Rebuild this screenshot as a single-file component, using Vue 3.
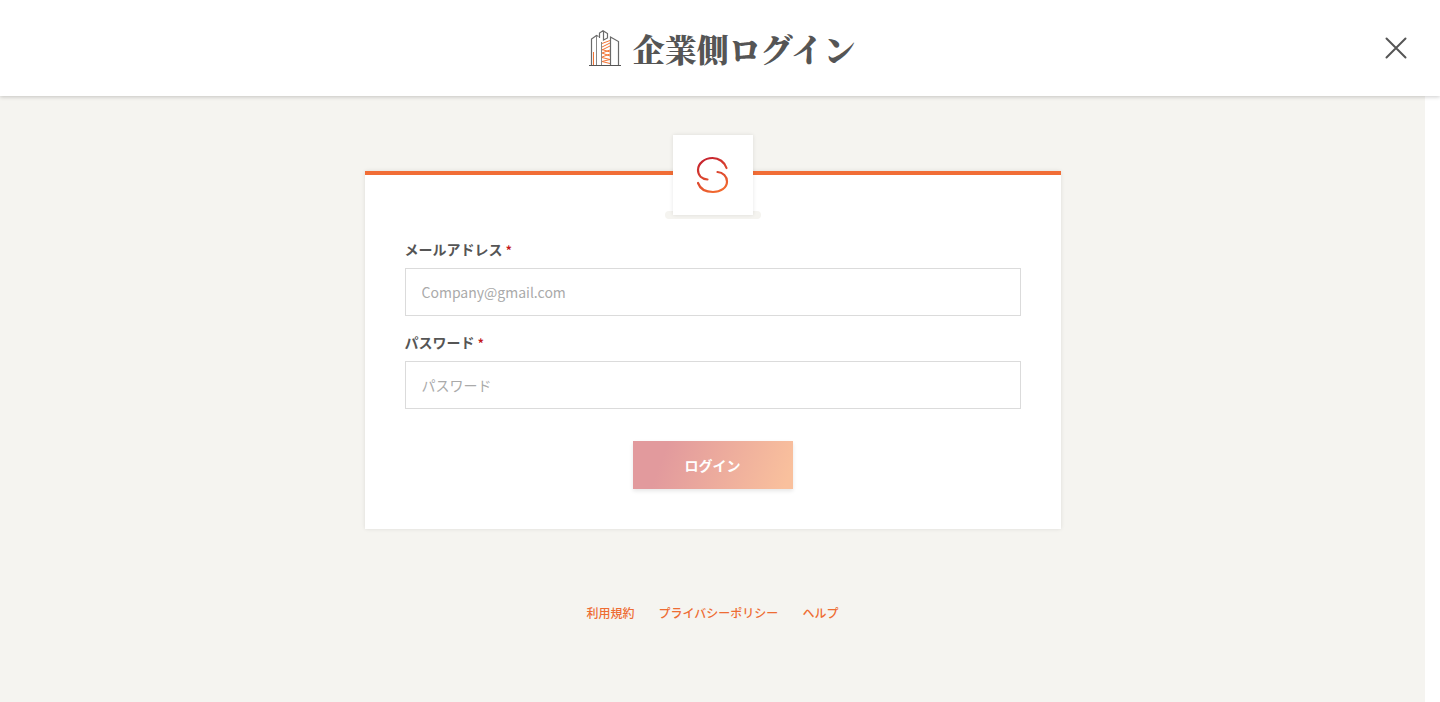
<script setup>
import { ref } from 'vue'

const email = ref('')
const password = ref('')
const links = ['利用規約', 'プライバシーポリシー', 'ヘルプ']
</script>

<template>
  <div class="page">
    <header class="header">
      <div class="brand">
        <svg class="building" viewBox="0 0 32 36" width="32" height="36" fill="none" aria-hidden="true">
          <g stroke="#6a6a6a" stroke-width="1.200">
            <path d="M2.500 35V9L7.500 5.500L9.500 6.500" />
            <path d="M10.500 8V3L14 .700L18.500 3.500V8L14.500 10V1" />
            <path d="M21.500 35V7L29.500 11.500V35" />
          </g>
          <path d="M7.500 35V6M12.500 35V12" stroke="#888" />
          <path d="M0 35.500H32" stroke="#555" />
          <path d="M4.500 35V22M13 13.500L21 10.500M13 17L21 13M13 20L21 16M13 19.500L21 22M13 23L21 20M13 23L21 26M13 27L21 24M13 27.500L21 29.500M13 31.500L21 29.500M13 31.500L21 33.500" stroke="#f37435" />
        </svg>
        <h1>企業側ログイン</h1>
      </div>
      <button class="close" type="button" aria-label="閉じる">
        <svg viewBox="0 0 22 22" width="22" height="22" aria-hidden="true">
          <path d="M1.500 1.500L20.500 20.500M20.500 1.500L1.500 20.500" stroke="#555" stroke-width="2" stroke-linecap="round" />
        </svg>
      </button>
    </header>

    <main class="main">
      <form class="card" @submit.prevent>
        <div class="emblem">
          <svg viewBox="0 0 34 38" width="34" height="38" fill="none" aria-hidden="true">
            <defs>
              <linearGradient id="emblem-stroke" x1="8" y1="2" x2="24" y2="36" gradientUnits="userSpaceOnUse">
                <stop offset="0" stop-color="#c4202e" />
                <stop offset="1" stop-color="#f36c2f" />
              </linearGradient>
            </defs>
            <path d="M30.500 12C28.500 6 23 2 16.500 2C8.500 2 2 7.500 2 14C2 19.500 6 23 11.500 23.500M21.500 16C27 16.500 31 20.500 31 25.500C31 32 24.500 36 17 36C9.500 36 4 32.500 2 27" stroke="url(#emblem-stroke)" stroke-width="2.200" stroke-linecap="round" />
          </svg>
        </div>

        <div class="field">
          <label for="email">メールアドレス <span class="required">*</span></label>
          <input id="email" v-model="email" type="email" placeholder="Company@gmail.com" />
        </div>
        <div class="field">
          <label for="password">パスワード <span class="required">*</span></label>
          <input id="password" v-model="password" type="password" placeholder="パスワード" />
        </div>
        <button class="submit" type="submit">ログイン</button>
      </form>

      <nav class="links">
        <a v-for="link in links" :key="link" href="#">{{ link }}</a>
      </nav>
    </main>
  </div>
</template>

<style>
body {
  margin: 0;
  background: #fff;
}
</style>

<style scoped>
.page {
  display: flex;
  flex-direction: column;
  min-height: 100vh;
  color: #555;
  font-family: "Noto Sans CJK JP", sans-serif;
}

.header {
  position: relative;
  z-index: 1;
  display: grid;
  grid-template-columns: 1fr auto 1fr;
  align-items: center;
  height: 96px;
  padding: 0 33px 0 37px;
  background: #fff;
  box-shadow: 0 1px 4px rgba(0, 0, 0, 0.2);
}

.brand {
  grid-column: 2;
  display: flex;
  align-items: center;
  gap: 12px;
}

h1 {
  margin: 0;
  font-family: "Noto Serif CJK JP", "Noto Serif JP", "Noto Sans CJK JP", serif;
  font-size: 32px;
  font-weight: 900;
  line-height: 48px;
}

.close {
  display: flex;
  justify-self: end;
  padding: 0;
  border: 0;
  background: none;
}

.main {
  flex: 1;
  box-sizing: border-box;
  margin-right: 15px;
  padding: 75px 24px 0;
  background: #f5f4f0;
}

.card {
  position: relative;
  z-index: 0;
  box-sizing: border-box;
  max-width: 696px;
  margin: 0 auto;
  padding: 64px 40px 40px;
  border-top: 4px solid #f16d36;
  background: #fff;
  box-shadow: 0 0 4px rgba(0, 0, 0, 0.1);
}

.emblem {
  position: absolute;
  top: -40px;
  left: 50%;
  display: flex;
  align-items: center;
  justify-content: center;
  width: 80px;
  height: 80px;
  margin-left: -40px;
  background: #fff;
  box-shadow: 0 0 4px rgba(0, 0, 0, 0.1);
}

.emblem::before {
  content: "";
  position: absolute;
  z-index: -1;
  bottom: -4px;
  left: -8px;
  width: 96px;
  height: 8px;
  border-radius: 4px;
  background: #f5f4f0;
}

.field {
  margin-bottom: 16px;
}

label {
  display: block;
  margin-bottom: 8px;
  font-size: 14px;
  font-weight: 700;
  line-height: 21px;
}

.required {
  color: #c4161c;
  font-size: 12px;
}

input {
  display: block;
  box-sizing: border-box;
  width: 100%;
  height: 48px;
  padding: 0 16px;
  border: 1px solid #dbdbdb;
  border-radius: 0;
  outline: 0;
  background: #fff;
  color: #555;
  font: 14px "Noto Sans CJK JP", sans-serif;
}

input::placeholder {
  color: #aaa;
  opacity: 1;
}

.submit {
  display: block;
  width: 160px;
  height: 48px;
  margin: 32px auto 0;
  padding: 0;
  border: 0;
  background: linear-gradient(110deg, #e29a9d 20%, #f9c09d 95%);
  box-shadow: 0 2px 4px rgba(0, 0, 0, 0.1);
  color: #fff;
  font: 700 14px "Noto Sans CJK JP", sans-serif;
}

.links {
  display: flex;
  flex-wrap: wrap;
  justify-content: center;
  gap: 24px;
  margin-top: 75px;
  padding-bottom: 40px;
}

.links a {
  color: #ee6c33;
  font-size: 12px;
  font-weight: 500;
  line-height: 18px;
  text-decoration: none;
}
</style>
